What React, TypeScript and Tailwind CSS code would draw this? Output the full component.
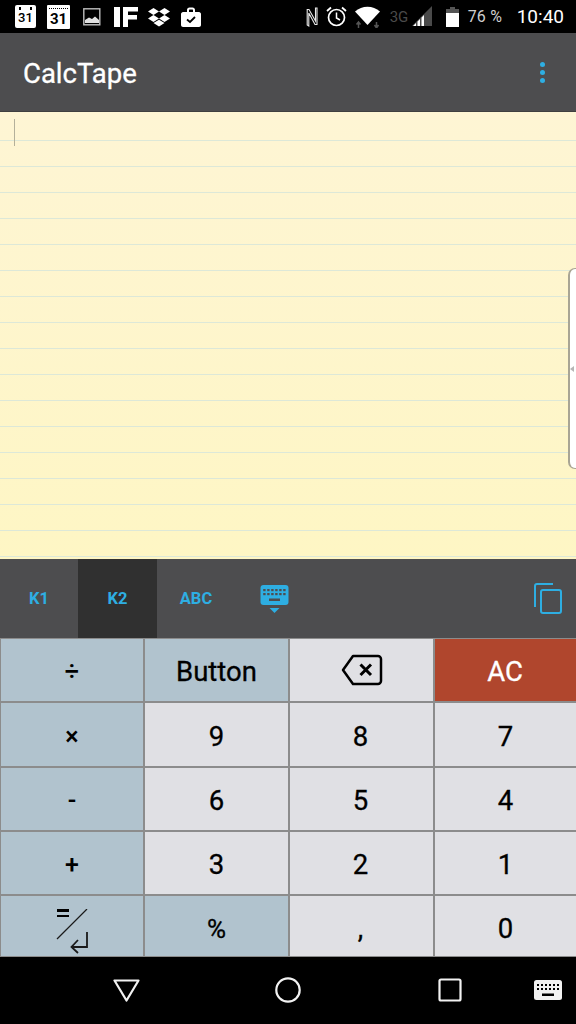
import React from "react";

const font = { fontFamily: "Roboto, 'Liberation Sans', sans-serif" };

function CalSmall() {
  return (
    <div className="relative flex h-[23px] w-[21px] flex-col items-center rounded-[2px] bg-white">
      <div className="mt-[2px] flex w-[13px] justify-between">
        <span className="h-[3px] w-[2px] bg-black" />
        <span className="h-[3px] w-[2px] bg-black" />
      </div>
      <span className="mt-[1px] text-[13px] leading-[14px] font-medium text-black">31</span>
    </div>
  );
}

function CalBig() {
  return (
    <div className="flex h-[24px] w-[23px] flex-col items-center rounded-[1px] bg-white">
      <div className="mt-[3px] h-[1px] w-[19px] border-t border-dotted border-black" />
      <span className="mt-[2px] text-[15px] leading-[16px] font-bold text-black">31</span>
    </div>
  );
}

function StatusLeft() {
  return (
    <div className="flex items-center">
      <div className="ml-[15px]"><CalSmall /></div>
      <div className="ml-[11px]"><CalBig /></div>
      <svg className="ml-[13px]" width="18" height="18" viewBox="0 0 18 18">
        <rect x="0.8" y="0.8" width="16" height="16" fill="none" stroke="#bdbdbd" strokeWidth="1.4" />
        <path d="M2 15V12L6 9.5 9 11 12 8.500 16 12V15Z" fill="#e0e0e0" />
      </svg>
      <svg className="ml-[13px]" width="24" height="20" viewBox="0 0 24 20">
        <rect x="0" y="0" width="6" height="20" fill="#fff" />
        <path d="M9 0H24V4.500H14V8H23V12.500H14V20H9Z" fill="#fff" />
      </svg>
      <svg className="ml-[10px]" width="22" height="20" viewBox="0 0 22 20">
        <path d="M5.500 1 11 4.500 5.500 8 0 4.500Z M16.500 1 22 4.500 16.500 8 11 4.500Z M5.500 8 11 11.500 5.500 15 0 11.500Z M16.500 8 22 11.500 16.500 15 11 11.500Z" fill="#fff" />
        <path d="M5.500 16 11 12.800 16.500 16 11 19.500Z" fill="#fff" />
      </svg>
      <svg className="ml-[11px]" width="20" height="20" viewBox="0 0 20 20">
        <path d="M2 5H6V3C6 1.500 7 .5 8.500 .5H11.500C13 .5 14 1.500 14 3V5H18C19 5 20 6 20 7V18C20 19 19 20 18 20H2C1 20 0 19 0 18V7C0 6 1 5 2 5ZM8 5H12V3C12 2.700 11.800 2.500 11.500 2.500H8.500C8.200 2.500 8 2.700 8 3Z" fill="#fff" fillRule="evenodd" />
        <path d="M6 12.500 9 15 14 10" fill="none" stroke="#000" strokeWidth="1.800" />
      </svg>
    </div>
  );
}

function StatusRight() {
  return (
    <div className="flex items-center">
      <svg width="12" height="20" viewBox="0 0 12 20">
        <path d="M1.200 4V18L2.800 19V6L9 17.500H11V1H9.500V14L3 2.500H1.200Z" fill="none" stroke="#e8e8e8" strokeWidth="1.100" />
      </svg>
      <svg className="ml-[8px]" width="21" height="21" viewBox="0 0 21 21">
        <circle cx="10.500" cy="11.500" r="8" fill="none" stroke="#fff" strokeWidth="1.700" />
        <path d="M10.500 6.500V12L14 14" fill="none" stroke="#fff" strokeWidth="1.500" />
        <path d="M1 5 5 1.500M20 5 16 1.500" fill="none" stroke="#fff" strokeWidth="1.800" />
      </svg>
      <svg className="ml-[8px]" width="26" height="22" viewBox="0 0 26 22">
        <path d="M0 5.500C7 -1 18 -1 25 5.500L12.500 19Z" fill="#fff" />
        <path d="M3.500 22V17M1.500 18.500 3.500 16 5.500 18.500" fill="none" stroke="#555" strokeWidth="1.500" />
        <path d="M21.500 16V21M19.500 19 21.500 22 23.500 19" fill="none" stroke="#555" strokeWidth="1.500" />
      </svg>
      <span className="mt-[3px] ml-[9px] w-[19px] self-start text-[15px] leading-[17px] text-[#4a4a4a]">3G</span>
      <svg className="ml-[3px]" width="21" height="21" viewBox="0 0 21 21">
        <path d="M0 20 20 0V20Z" fill="#4a4a4a" />
        <path d="M1 20 4 17V20ZM5.500 20V15.500L8 13V20ZM9.500 20V11.500L12 9V20Z" fill="#fff" />
      </svg>
      <svg className="ml-[13px]" width="13" height="20" viewBox="0 0 13 20">
        <path d="M4 0H9V2H13V7H0V2H4Z" fill="#555" />
        <rect x="0" y="6" width="13" height="14" fill="#fff" />
      </svg>
      <span className="ml-[9px] w-[35px] text-[16px] leading-[20px] tracking-[0.2px] text-[#cfcfcf]">76 %</span>
      <span className="ml-[14px] text-[19px] leading-[20px] text-white">10:40</span>
    </div>
  );
}

function Paper() {
  const rows = Array.from({ length: 16 });
  return (
    <div className="relative h-[447px] overflow-hidden bg-linear-to-b from-[#fef5d4] to-[#fef6c4]">
      <div className="h-[29px] border-b border-[#dde8d8]" />
      {rows.map((_, i) => (
        <div key={i} className="h-[26px] border-b border-[#dde8d8]" />
      ))}
      <div className="absolute top-[7px] left-[14px] h-[27px] w-[1px] bg-[#b4b09a]" />
      <div className="absolute top-[156px] right-0 flex h-[201px] w-[8px] items-center rounded-l-[7px] border-y border-l-2 border-[#a9a594] bg-white">
        <span className="h-0 w-0 border-y-[3px] border-r-[4px] border-y-transparent border-r-[#b5b5b5]" />
      </div>
    </div>
  );
}

function Tabs() {
  return (
    <div className="flex h-[79px] items-stretch bg-[#4d4d4f] text-[16.5px] font-bold text-[#2eaee2]">
      <div className="flex w-[78px] items-center justify-center pt-[2px]">K1</div>
      <div className="flex w-[79px] items-center justify-center bg-[#303030] pt-[2px]">K2</div>
      <div className="flex w-[78px] items-center justify-center pt-[2px]">ABC</div>
      <div className="flex w-[79px] items-center justify-center pt-[2px]">
        <svg width="29" height="29" viewBox="0 0 29 29">
          <rect x="0.500" y="0" width="28" height="20" rx="3" fill="#2eaee2" />
          <g fill="#4d4d4f">
            {[4, 8, 12, 16, 20, 24].map((x) => (
              <g key={x}>
                <rect x={x - 0.8} y="4" width="2.400" height="2.200" />
                <rect x={x - 0.8} y="8" width="2.400" height="2.200" />
              </g>
            ))}
            <rect x="9" y="13.500" width="11" height="2.500" />
          </g>
          <path d="M9.500 23H19.500L14.500 28Z" fill="#2eaee2" />
        </svg>
      </div>
      <div className="flex flex-1 items-center justify-end pr-[14px] pb-[1px]">
        <svg width="28" height="31" viewBox="0 0 28 31" fill="none" stroke="#2eaee2" strokeWidth="2">
          <path d="M19 1H3C2 1 1 2 1 3V24" />
          <rect x="7" y="7" width="20" height="23" rx="2" />
        </svg>
      </div>
    </div>
  );
}

function Backspace() {
  return (
    <svg width="42" height="32" viewBox="0 0 42 32" fill="none" stroke="#000">
      <path d="M12 2H37C38.500 2 40 3.500 40 5V27C40 28.500 38.500 30 37 30H12L2 16Z" strokeWidth="2.500" strokeLinejoin="round" />
      <path d="M19.500 10.500 30 21M30 10.500 19.500 21" strokeWidth="3" />
    </svg>
  );
}

function EnterKey() {
  return (
    <div className="relative h-[60px] w-full">
      <div className="absolute top-[13px] left-[56px] flex w-[12px] flex-col gap-[3px]">
        <span className="h-[2.500px] bg-black" />
        <span className="h-[2.500px] bg-black" />
      </div>
      <svg className="absolute top-[13px] left-[54px]" width="34" height="45" viewBox="0 0 34 45" fill="none" stroke="#1a1a1a">
        <path d="M2 30 32 0" strokeWidth="1.200" />
        <path d="M32 23V38H17M23 31 16.500 38 23 44" strokeWidth="1.800" />
      </svg>
    </div>
  );
}

type K = { label?: React.ReactNode; cls?: string; tone: "b" | "g" | "r" };

const digit = "pt-[4px] text-[27.5px] [-webkit-text-stroke:0.3px]";
const digit3 = "pt-[4px] pr-[2px] text-[27.5px] [-webkit-text-stroke:0.3px]";
const last = "pt-[6px] text-[27.5px] [-webkit-text-stroke:0.3px]";
const op = "pt-[4px] text-[25px] font-medium";

const keys: K[] = [
  { label: "÷", tone: "b", cls: "pt-[3px] text-[25px] font-medium" },
  { label: "Button", tone: "b", cls: "pt-[3px] text-[27.5px] [-webkit-text-stroke:0.3px]" },
  { label: <Backspace />, tone: "g" },
  { label: "AC", tone: "r", cls: "pt-[3px] pr-[1px] text-[27.5px] [-webkit-text-stroke:0.3px] text-white" },
  { label: "×", tone: "b", cls: op },
  { label: "9", tone: "g", cls: digit },
  { label: "8", tone: "g", cls: digit3 },
  { label: "7", tone: "g", cls: digit },
  { label: "-", tone: "b", cls: op },
  { label: "6", tone: "g", cls: digit },
  { label: "5", tone: "g", cls: digit3 },
  { label: "4", tone: "g", cls: digit },
  { label: "+", tone: "b", cls: op },
  { label: "3", tone: "g", cls: digit },
  { label: "2", tone: "g", cls: digit3 },
  { label: "1", tone: "g", cls: digit },
  { label: <EnterKey />, tone: "b" },
  { label: "%", tone: "b", cls: "pt-[6px] text-[26px] [-webkit-text-stroke:0.3px]" },
  { label: ",", tone: "g", cls: "pt-[6px] pr-[2px] text-[27.5px] [-webkit-text-stroke:0.3px]" },
  { label: "0", tone: "g", cls: last },
];

const toneCls = { b: "bg-[#b1c3ce]", g: "bg-[#e0e0e4]", r: "bg-[#b0462d]" };

function Keys() {
  return (
    <div className="grid h-[319px] grid-cols-[142px_143px_143px_1fr] grid-rows-[62px_63px_62px_62px_1fr] gap-[2px] bg-[#8c8c8c] pt-[1px] pb-[1px] pl-[1px]">
      {keys.map((k, i) => (
        <div
          key={i}
          className={`flex items-center justify-center overflow-hidden text-black ${toneCls[k.tone]} ${k.cls ?? ""}`}
        >
          {k.label}
        </div>
      ))}
    </div>
  );
}

function Nav() {
  return (
    <div className="relative flex h-[67px] items-center bg-black">
      <svg className="absolute top-[22px] left-[113px]" width="27" height="23" viewBox="0 0 27 23" fill="none" stroke="#f2f2f2" strokeWidth="2.200" strokeLinejoin="round">
        <path d="M1.500 1.500H25.500L13.500 21.500Z" />
      </svg>
      <svg className="absolute top-[20px] left-[275px]" width="26" height="26" viewBox="0 0 26 26" fill="none" stroke="#f2f2f2" strokeWidth="2.200">
        <circle cx="13" cy="13" r="11.700" />
      </svg>
      <svg className="absolute top-[21px] left-[438px]" width="24" height="24" viewBox="0 0 24 24" fill="none" stroke="#f2f2f2" strokeWidth="2.200" strokeLinejoin="round">
        <rect x="1.500" y="1.500" width="21" height="21" rx="1.500" />
      </svg>
      <svg className="absolute top-[23px] left-[534px]" width="28" height="20" viewBox="0 0 28 20">
        <rect width="28" height="20" rx="2.500" fill="#f2f2f2" />
        <g fill="#000">
          {[4, 8, 12, 16, 20, 24].map((x) => (
            <g key={x}>
              <rect x={x - 1} y="4" width="2" height="2" />
              <rect x={x - 1} y="8" width="2" height="2" />
            </g>
          ))}
          <rect x="8" y="13.500" width="12" height="2.500" />
        </g>
      </svg>
    </div>
  );
}

export default function App() {
  return (
    <div className="flex h-[1024px] w-[576px] flex-col overflow-hidden bg-black" style={font}>
      <div className="flex h-[33px] items-center justify-between bg-black pr-[12px]">
        <StatusLeft />
        <StatusRight />
      </div>
      <div className="flex h-[79px] items-center justify-between border-b border-[#3f3f3f] bg-[#4d4d4f] pr-[31px] pl-[23px]">
        <span className="pt-[3px] text-[27.5px] leading-[30px] text-white [-webkit-text-stroke:0.3px]">CalcTape</span>
        <div className="flex flex-col gap-[3px]">
          <span className="h-[5px] w-[5px] rounded-full bg-[#2eaee2]" />
          <span className="h-[5px] w-[5px] rounded-full bg-[#2eaee2]" />
          <span className="h-[5px] w-[5px] rounded-full bg-[#2eaee2]" />
        </div>
      </div>
      <Paper />
      <Tabs />
      <Keys />
      <Nav />
    </div>
  );
}
